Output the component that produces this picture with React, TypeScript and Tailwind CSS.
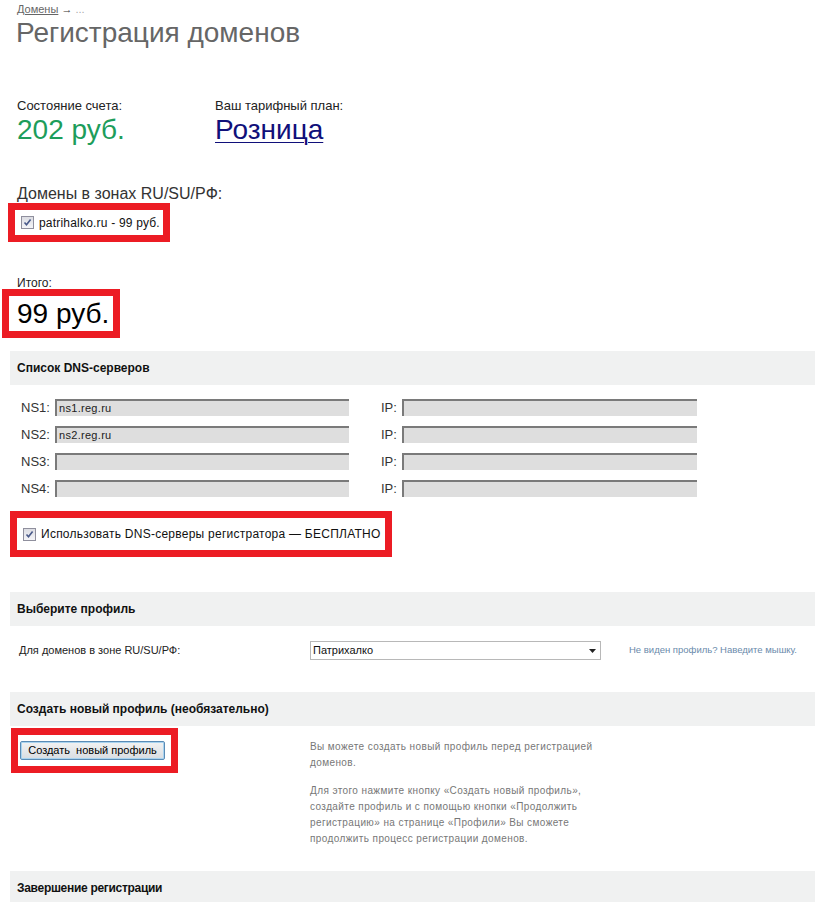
import React from "react";

function Check() {
  return (
    <span className="inline-flex h-[13px] w-[13px] shrink-0 items-center justify-center border border-[#8f8f9d] bg-gradient-to-b from-[#dcdde3] to-[#f4f4f7]">
      <svg width="9" height="9" viewBox="0 0 9 9">
        <path d="M1.5 4.5 L3.5 6.8 L7.6 1.6" fill="none" stroke="#4a5a8a" strokeWidth="1.6" />
      </svg>
    </span>
  );
}

function Bar({ title, condensed }: { title: string; condensed?: boolean }) {
  return (
    <div className="ml-[10px] flex h-[34px] w-[805px] items-center bg-[#f0f1f1] pl-[7px] text-[12px] font-bold text-[#111]">
      <span className={condensed ? "tracking-[-0.3px]" : ""}>{title}</span>
    </div>
  );
}

function Field({ value, w }: { value?: string; w: string }) {
  return (
    <div className={`${w} flex h-[17px] items-center border-l-2 border-t-2 border-[#7a7a7a] bg-[#dedede] pl-[2px] text-[11px] tracking-[0.3px] text-[#222]`}>
      {value}
    </div>
  );
}

const rows = [
  { ns: "NS1:", value: "ns1.reg.ru" },
  { ns: "NS2:", value: "ns2.reg.ru" },
  { ns: "NS3:", value: "" },
  { ns: "NS4:", value: "" },
];

export default function App() {
  return (
    <div className="h-[902px] w-[828px] overflow-hidden bg-white font-['Liberation_Sans',Arial,sans-serif] text-[#222]">
      <div className="pl-[17px] pt-[3px] text-[11px] leading-[13px] text-[#666]">
        <span className="underline">Домены</span>
        <span className="font-bold text-[#333]"> → </span>
        <span className="text-[#aaa]">...</span>
      </div>
      <h1 className="mt-[1px] pl-[16px] text-[28px] leading-[32px] text-[#666]">Регистрация доменов</h1>

      <div className="mt-[49px] flex pl-[17px]">
        <div className="w-[198px]">
          <div className="text-[13px] leading-[16px] text-[#222]">Состояние счета:</div>
          <div className="text-[28px] leading-[32px] text-[#1d9d5b]">202 руб.</div>
        </div>
        <div>
          <div className="text-[13px] leading-[16px] text-[#222]">Ваш тарифный план:</div>
          <div className="text-[28px] leading-[32px] text-[#10107a] underline decoration-1 underline-offset-[3px]">Розница</div>
        </div>
      </div>

      <div className="mt-[38px] pl-[17px] text-[16px] leading-[19px] text-[#333]">Домены в зонах RU/SU/PФ:</div>
      <div className="ml-[8px] flex h-[39px] w-[162px] items-center gap-[5px] border-[7px] border-[#ec1c24] bg-white pl-[6px] text-[12px] tracking-[0.2px] text-[#111]">
        <Check />
        <span>patrihalko.ru - 99 руб.</span>
      </div>

      <div className="mt-[35px] pl-[17px] text-[12px] leading-[12px] text-[#222]">Итого:</div>
      <div className="ml-[2px] flex h-[49px] w-[118px] items-center border-[7px] border-[#ec1c24] bg-white pl-[8px] text-[28px] text-black">
        99 руб.
      </div>

      <div className="mt-[13px]">
        <Bar title="Список DNS-серверов" />
      </div>

      <div className="mt-[14px] flex flex-col gap-[10px]">
        {rows.map((r) => (
          <div key={r.ns} className="flex h-[17px] items-center pl-[21px] text-[13px] text-[#333]">
            <span className="w-[34px]">{r.ns}</span>
            <Field value={r.value} w="w-[294px]" />
            <span className="w-[32px]" />
            <span className="w-[21px]">IP:</span>
            <Field w="w-[295px]" />
          </div>
        ))}
      </div>

      <div className="ml-[10px] mt-[14px] flex h-[46px] w-[382px] items-center gap-[5px] border-[7px] border-[#ec1c24] bg-white pl-[6px] text-[12px] tracking-[0.25px] text-[#111]">
        <Check />
        <span>Использовать DNS-серверы регистратора — БЕСПЛАТНО</span>
      </div>

      <div className="mt-[35px]">
        <Bar title="Выберите профиль" />
      </div>

      <div className="mt-[15px] flex h-[19px] items-center text-[11px]">
        <span className="w-[310px] pl-[19px] text-[#222]">Для доменов в зоне RU/SU/РФ:</span>
        <div className="flex h-[19px] w-[291px] items-center justify-between border border-[#b8b8b8] bg-white pl-[2px] pr-[4px] text-[11px] text-[#111]">
          <span>Патрихалко</span>
          <svg width="7" height="4" viewBox="0 0 7 4">
            <path d="M0 0 H7 L3.5 4 Z" fill="#222" />
          </svg>
        </div>
        <span className="ml-[28px] text-[9.5px] text-[#6a8aab]">Не виден профиль? Наведите мышку.</span>
      </div>

      <div className="mt-[32px]">
        <Bar title="Создать новый профиль (необязательно)" />
      </div>

      <div className="mt-[2px] flex items-start">
        <div className="ml-[11px] flex h-[45px] w-[167px] items-center border-[7px] border-[#ec1c24] bg-white pl-[2px]">
          <button
            type="button"
            className="h-[19px] w-[145px] rounded-[2px] border border-[#5a8bb5] bg-gradient-to-b from-[#f2f2f2] to-[#d9dde2] text-[11px] text-black shadow-[inset_0_0_0_1px_#a9d3ef]"
          >
            Создать&nbsp; новый профиль
          </button>
        </div>
        <div className="ml-[132px] mt-[11px] w-[295px] text-[10px] leading-[16px] tracking-[0.4px] text-[#777]">
          <p>Вы можете создать новый профиль перед регистрацией доменов.</p>
          <p className="mt-[12px]">
            Для этого нажмите кнопку «Создать новый профиль», создайте профиль и с помощью кнопки «Продолжить регистрацию» на странице «Профили» Вы сможете продолжить процесс регистрации доменов.
          </p>
        </div>
      </div>

      <div className="mt-[24px]">
        <Bar title="Завершение регистрации" condensed />
      </div>
    </div>
  );
}
